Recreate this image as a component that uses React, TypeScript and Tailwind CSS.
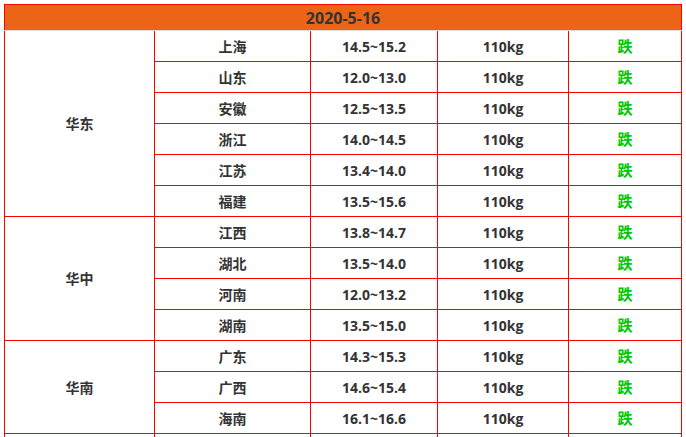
const groups = [
  {
    region: "华东",
    rows: [
      ["上海", "14.5~15.2"],
      ["山东", "12.0~13.0"],
      ["安徽", "12.5~13.5"],
      ["浙江", "14.0~14.5"],
      ["江苏", "13.4~14.0"],
      ["福建", "13.5~15.6"],
    ],
  },
  {
    region: "华中",
    rows: [
      ["江西", "13.8~14.7"],
      ["湖北", "13.5~14.0"],
      ["河南", "12.0~13.2"],
      ["湖南", "13.5~15.0"],
    ],
  },
  {
    region: "华南",
    rows: [
      ["广东", "14.3~15.3"],
      ["广西", "14.6~15.4"],
      ["海南", "16.1~16.6"],
    ],
  },
];

const cell = "border border-[#ff0000] text-center align-middle h-[31px] p-0";

export default function App() {
  return (
    <div className="w-[686px] h-[437px] overflow-hidden bg-white pt-[4px] pl-[4px] font-['Open_Sans','Noto_Sans_CJK_SC',sans-serif] font-bold text-[14px] text-[#333333]">
      <table className="border-collapse table-fixed w-[677px]">
        <colgroup>
          <col className="w-[150px]" />
          <col className="w-[156px]" />
          <col className="w-[127px]" />
          <col className="w-[131px]" />
          <col className="w-[113px]" />
        </colgroup>
        <tbody>
          <tr>
            <td
              colSpan={5}
              className="border border-[#ff0000] border-b-[#d9d9d9] bg-[#ec6516] text-center h-[26px] p-0 text-[16px] leading-none"
            >
              2020-5-16
            </td>
          </tr>
          {groups.map((g) =>
            g.rows.map(([prov, price], i) => (
              <tr key={g.region + prov}>
                {i === 0 && (
                  <td rowSpan={g.rows.length} className={cell}>
                    {g.region}
                  </td>
                )}
                <td className={cell}>{prov}</td>
                <td className={cell}>{price}</td>
                <td className={cell}>110kg</td>
                <td className={cell + " text-[#00c800] text-[15px]"}>跌</td>
              </tr>
            ))
          )}
          {/* next region starts below the fold */}
          <tr>
            <td className={cell} />
            <td className={cell} />
            <td className={cell} />
            <td className={cell} />
            <td className={cell} />
          </tr>
        </tbody>
      </table>
    </div>
  );
}
